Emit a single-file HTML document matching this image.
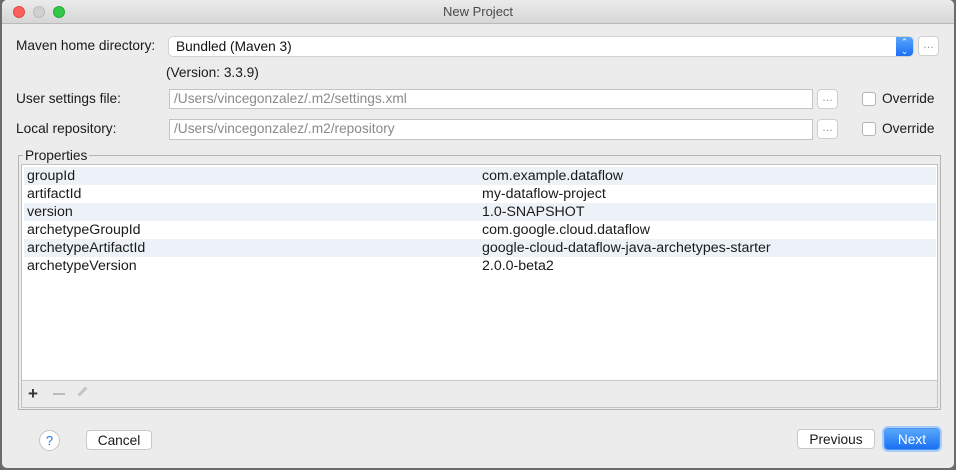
<!DOCTYPE html>
<html><head><style>
*{box-sizing:border-box;margin:0;padding:0}
body{width:956px;height:470px;background:#6b6b6b;font-family:"Liberation Sans",sans-serif;font-size:13.7px;color:#1a1a1a;position:relative;overflow:hidden}
.win{position:absolute;left:2px;top:0;width:952px;height:468px;background:#ececec;border-radius:5px;overflow:hidden}
.title{position:absolute;left:0;top:0;width:100%;height:24px;background:linear-gradient(#ebebeb,#d6d6d6);border-bottom:1px solid #b8b8b8;text-align:center;line-height:24px;color:#4a4a4a;font-size:13px}
.dot{position:absolute;top:6px;width:12px;height:12px;border-radius:50%}
.a{position:absolute;white-space:nowrap}
.field{position:absolute;background:#fff;border:1px solid #c4c4c4;color:#8a8a8a;padding-left:4px;line-height:18px}
.dots{position:absolute;width:21px;height:20px;background:#fff;border:1px solid #cfcfcf;border-radius:4px;color:#888;text-align:center;line-height:16px;font-size:11px}
.cb{position:absolute;width:14px;height:14px;background:#fff;border:1px solid #b5b5b5;border-radius:3px}
.row{position:absolute;left:22px;width:912px;height:18px;line-height:18px;font-size:14.2px}
.row span{position:absolute}
.btn{position:absolute;background:#fff;border:1px solid #c8c8c8;border-radius:4px;text-align:center;line-height:19px}
</style></head><body>
<div class="win">
<div class="title">New Project
<div class="dot" style="left:11px;background:#fc605c;border:1px solid #de4a45"></div>
<div class="dot" style="left:31px;background:#d0d0d0;border:1px solid #bdbdbd"></div>
<div class="dot" style="left:51px;background:#34c84a;border:1px solid #27aa35"></div>
</div>
<div class="a" style="left:14px;top:38px">Maven home directory:</div>
<div class="a" style="left:167px;top:37px;width:744px;height:19px;background:#fff;border-radius:4px;box-shadow:0 0 0 1px #d2d2d2;padding-left:7px;line-height:19px;color:#111">Bundled (Maven 3)</div>
<div class="a" style="left:894px;top:37px;width:17px;height:19px;background:linear-gradient(#5aa6fb,#1c6ff4);border-radius:0 4px 4px 0;color:#fff;font-size:9px;text-align:center;line-height:9px;padding-top:1px">&#8963;<br>&#8964;</div>
<div class="dots" style="left:916px;top:36px">…</div>
<div class="a" style="left:164px;top:65px">(Version: 3.3.9)</div>
<div class="a" style="left:14px;top:91px">User settings file:</div>
<div class="field" style="left:167px;top:89px;width:644px;height:20px">/Users/vincegonzalez/.m2/settings.xml</div>
<div class="dots" style="left:815px;top:89px">…</div>
<div class="cb" style="left:860px;top:92px"></div>
<div class="a" style="left:880px;top:91px">Override</div>
<div class="a" style="left:14px;top:121px">Local repository:</div>
<div class="field" style="left:167px;top:119px;width:644px;height:21px">/Users/vincegonzalez/.m2/repository</div>
<div class="dots" style="left:815px;top:119px">…</div>
<div class="cb" style="left:860px;top:122px"></div>
<div class="a" style="left:880px;top:121px">Override</div>
<div class="a" style="left:16px;top:155px;width:923px;height:255px;border:1px solid #b3b3b3"></div>
<div class="a" style="left:21px;top:148px;background:#ececec;padding:0 2px">Properties</div>
<div class="a" style="left:19px;top:164px;width:917px;height:244px;border:1px solid #c2c2c2;background:#ececec"></div>
<div class="a" style="left:20px;top:165px;width:915px;height:216px;background:#fff;border-bottom:1px solid #c8c8c8"></div>
<div class="row" style="top:167px;background:#edf2f8"><span style="left:3px">groupId</span><span style="left:458px">com.example.dataflow</span></div>
<div class="row" style="top:185px"><span style="left:3px">artifactId</span><span style="left:458px">my-dataflow-project</span></div>
<div class="row" style="top:203px;background:#edf2f8"><span style="left:3px">version</span><span style="left:458px">1.0-SNAPSHOT</span></div>
<div class="row" style="top:221px"><span style="left:3px">archetypeGroupId</span><span style="left:458px">com.google.cloud.dataflow</span></div>
<div class="row" style="top:239px;background:#edf2f8"><span style="left:3px">archetypeArtifactId</span><span style="left:458px">google-cloud-dataflow-java-archetypes-starter</span></div>
<div class="row" style="top:257px"><span style="left:3px">archetypeVersion</span><span style="left:458px">2.0.0-beta2</span></div>
<div class="a" style="left:26px;top:384px;font-size:17px;font-weight:bold;color:#333">+</div>
<div class="a" style="left:51px;top:393px;width:12px;height:2px;background:#bbb"></div>
<div class="a" style="left:79px;top:386px;width:3px;height:11px;background:#c4c4c4;transform:rotate(45deg)"></div>
<div class="a" style="left:37px;top:430px;width:21px;height:21px;border-radius:50%;background:#fff;border:1px solid #c6c6c6;color:#1a7cf3;text-align:center;line-height:19px;font-size:13px">?</div>
<div class="btn" style="left:84px;top:430px;width:66px;height:20px">Cancel</div>
<div class="btn" style="left:795px;top:429px;width:78px;height:20px">Previous</div>
<div class="btn" style="left:882px;top:428px;width:56px;height:22px;background:linear-gradient(#5aa8fc,#1a6ff4);border-color:#4c93f6;color:#fff;line-height:21px;box-shadow:0 0 0 2px #a9cdfa">Next</div>
</div>
</body></html>
